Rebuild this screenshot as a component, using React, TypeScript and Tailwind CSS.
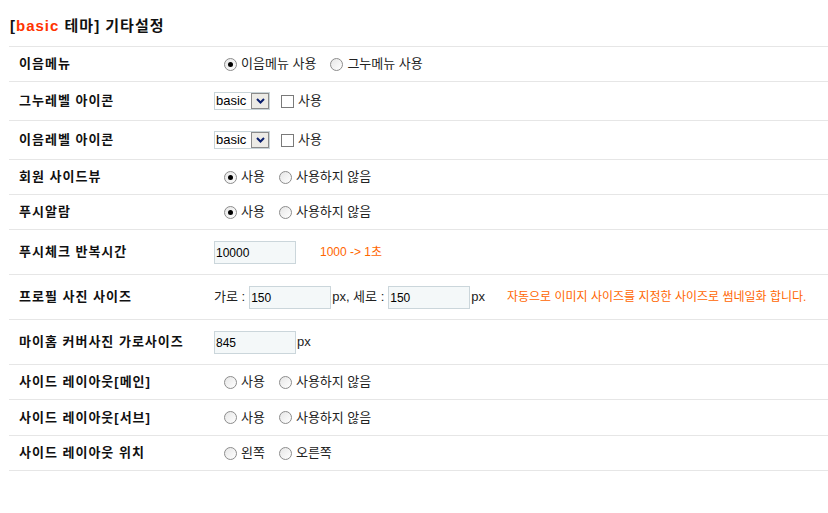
import React from "react";

const FONT = { fontFamily: '"Liberation Sans", "Noto Sans CJK KR", sans-serif' };

function Radio({ checked, label }: { checked?: boolean; label: string }) {
  return (
    <span className="flex items-center gap-[4px]">
      <span className="w-[13px] h-[13px] rounded-full border border-[#8c8c8c] bg-gradient-to-br from-[#e6e6e6] to-white flex items-center justify-center">
        {checked && <span className="w-[5px] h-[5px] rounded-full bg-black" />}
      </span>
      <span className="text-[13px] leading-[14px] text-[#222]">{label}</span>
    </span>
  );
}

function Radios({ items }: { items: { label: string; checked?: boolean }[] }) {
  return (
    <div className="flex items-center gap-[14px] ml-[10px]">
      {items.map((it) => (
        <Radio key={it.label} label={it.label} checked={it.checked} />
      ))}
    </div>
  );
}

function SelectBox() {
  return (
    <div className="flex items-center gap-[11px]">
      <div className="flex items-stretch h-[18px] w-[56px] border border-[#c8d4d8] bg-white">
        <span className="flex-1 text-[13px] leading-[16px] pl-[1px] text-black">basic</span>
        <span className="w-[18px] border border-[#8a8a8a] bg-[#ecebe6] flex items-center justify-center">
          <svg width="9" height="6" viewBox="0 0 9 6">
            <path d="M1 1 L4.5 4.5 L8 1" stroke="#0a1f6e" strokeWidth="2" fill="none" />
          </svg>
        </span>
      </div>
      <span className="flex items-center gap-[4px]">
        <span className="w-[13px] h-[13px] border border-[#7a7a7a] bg-white" />
        <span className="text-[13px] leading-[14px] text-[#222]">사용</span>
      </span>
    </div>
  );
}

function TextInput({ value }: { value: string }) {
  return (
    <div className="w-[82px] h-[23px] border border-[#cbd6db] bg-[#f4f8f9] flex items-center pl-[1px] pt-[2px] text-[12px] text-black">
      {value}
    </div>
  );
}

function Row({ label, h, children }: { label: string; h: string; children: React.ReactNode }) {
  return (
    <div className={`flex items-center border-b border-[#e6e6e6] ${h}`}>
      <div className="w-[205px] pl-[10px] text-[13px] tracking-[1px] font-bold text-[#111]">{label}</div>
      <div className="flex items-center">{children}</div>
    </div>
  );
}

export default function App() {
  return (
    <div className="w-[828px] h-[513px] bg-white pl-[9px]" style={FONT}>
      <div className="h-[46px] pt-[17px] pl-[1px] text-[15px] tracking-[1px] leading-[18px] font-bold text-[#111]">
        [<span className="text-[#ff3300]">basic</span> 테마] 기타설정
      </div>
      <div className="border-t border-[#e6e6e6]">
        <Row label="이음메뉴" h="h-[35px]">
          <Radios items={[{ label: "이음메뉴 사용", checked: true }, { label: "그누메뉴 사용" }]} />
        </Row>
        <Row label="그누레벨 아이콘" h="h-[39px]">
          <SelectBox />
        </Row>
        <Row label="이음레벨 아이콘" h="h-[39px]">
          <SelectBox />
        </Row>
        <Row label="회원 사이드뷰" h="h-[35px]">
          <Radios items={[{ label: "사용", checked: true }, { label: "사용하지 않음" }]} />
        </Row>
        <Row label="푸시알람" h="h-[35px]">
          <Radios items={[{ label: "사용", checked: true }, { label: "사용하지 않음" }]} />
        </Row>
        <Row label="푸시체크 반복시간" h="h-[45px]">
          <TextInput value="10000" />
          <span className="ml-[24px] text-[12px] text-[#ff6600]">1000 -&gt; 1초</span>
        </Row>
        <Row label="프로필 사진 사이즈" h="h-[45px]">
          <span className="text-[13px] text-[#222] mr-[4px]">가로 :</span>
          <TextInput value="150" />
          <span className="text-[13px] text-[#222] ml-[1px] mr-[4px]">px, 세로 :</span>
          <TextInput value="150" />
          <span className="text-[13px] text-[#222] ml-[1px]">px</span>
          <span className="ml-[22px] text-[12px] text-[#ff6600]">
            자동으로 이미지 사이즈를 지정한 사이즈로 썸네일화 합니다.
          </span>
        </Row>
        <Row label="마이홈 커버사진 가로사이즈" h="h-[45px]">
          <TextInput value="845" />
          <span className="text-[13px] text-[#222] ml-[1px]">px</span>
        </Row>
        <Row label="사이드 레이아웃[메인]" h="h-[35px]">
          <Radios items={[{ label: "사용" }, { label: "사용하지 않음" }]} />
        </Row>
        <Row label="사이드 레이아웃[서브]" h="h-[36px]">
          <Radios items={[{ label: "사용" }, { label: "사용하지 않음" }]} />
        </Row>
        <Row label="사이드 레이아웃 위치" h="h-[35px]">
          <Radios items={[{ label: "왼쪽" }, { label: "오른쪽" }]} />
        </Row>
      </div>
    </div>
  );
}
